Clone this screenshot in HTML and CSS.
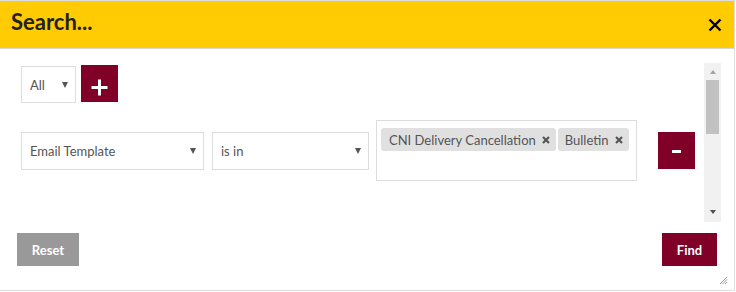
FILE: index.html
```html
<!DOCTYPE html>
<html lang="en">
<head>
    <meta charset="UTF-8">
    <title>Search</title>
    <link rel="stylesheet" href="styles.css">
</head>
<body>
    <div class="dialog">
        <div class="dialog-header">
            <span class="dialog-title">Search...</span>
            <svg class="close-icon" width="14" height="14" viewBox="0 0 14 14">
                <path d="M1.5 1.5 L12.5 12.5 M12.5 1.5 L1.5 12.5" stroke="#000" stroke-width="2.4" fill="none"/>
            </svg>
        </div>

        <div class="dialog-body">
            <div class="scroll-area">
                <div class="criteria">
                    <div class="row row-top">
                        <div class="select select-small">
                            <span>All</span>
                            <i class="caret"></i>
                        </div>
                        <button class="btn-square">
                            <svg width="37" height="37" viewBox="0 0 37 37">
                                <path d="M10.5 22.5 H26.5 M18.5 14.5 V30.5" stroke="#fff" stroke-width="3" fill="none"/>
                            </svg>
                        </button>
                    </div>

                    <div class="row row-criterion">
                        <div class="select select-field">
                            <span>Email Template</span>
                            <i class="caret"></i>
                        </div>
                        <div class="select select-op">
                            <span>is in</span>
                            <i class="caret"></i>
                        </div>
                        <div class="tag-box">
                            <span class="tag">CNI Delivery Cancellation
                                <svg class="tag-x" width="8" height="8" viewBox="0 0 8 8"><path d="M1 1 L7 7 M7 1 L1 7" stroke="#555" stroke-width="2.2" fill="none"/></svg>
                            </span>
                            <span class="tag">Bulletin
                                <svg class="tag-x" width="8" height="8" viewBox="0 0 8 8"><path d="M1 1 L7 7 M7 1 L1 7" stroke="#555" stroke-width="2.2" fill="none"/></svg>
                            </span>
                        </div>
                        <button class="btn-square btn-remove">
                            <svg width="37" height="37" viewBox="0 0 37 37">
                                <rect x="14" y="18" width="9" height="3" fill="#fff"/>
                            </svg>
                        </button>
                    </div>
                </div>

                <div class="scrollbar">
                    <i class="arrow-up"></i>
                    <div class="thumb"></div>
                    <div class="track-fill"></div>
                    <i class="arrow-down"></i>
                </div>
            </div>

            <div class="dialog-footer">
                <button class="btn btn-reset">Reset</button>
                <button class="btn btn-find">Find</button>
            </div>
        </div>

        <svg class="grip" width="9" height="9" viewBox="0 0 9 9">
            <path d="M8 1 L1 8 M8 3.5 L3.5 8 M8 6 L6 8" stroke="#999" stroke-width="1" fill="none"/>
        </svg>
    </div>
</body>
</html>
```

FILE: styles.css
```css
body {
    margin: 0;
    padding: 0;
    font-family: 'Lato', 'Liberation Sans', sans-serif;
    background: #fff;
}

.dialog {
    position: relative;
    width: 734px;
    height: 289px;
    border-top: 1px solid #ddd;
    border-right: 1px solid #ddd;
    border-bottom: 1px solid #ddd;
    display: flex;
    flex-direction: column;
}

.dialog-header {
    height: 47px;
    background: #ffcb02;
    border-bottom: 1px solid #d6d6d6;
    display: flex;
    justify-content: space-between;
    align-items: flex-start;
    padding: 0 12px 0 11px;
}

.dialog-title {
    font-size: 22px;
    font-weight: bold;
    line-height: 26px;
    color: #222;
    padding-top: 8px;
}

.close-icon {
    margin-top: 17px;
}

.dialog-body {
    flex: 1;
    padding: 14px 13px 0 17px;
    display: flex;
    flex-direction: column;
    gap: 11px;
}

.scroll-area {
    height: 159px;
    display: flex;
}

.criteria {
    flex: 1;
    padding: 2px 0 0 4px;
}

.row {
    display: flex;
}

.row-top {
    align-items: flex-start;
    gap: 5px;
}

.row-criterion {
    margin-top: 17px;
    align-items: center;
}

.select {
    box-sizing: border-box;
    border: 1px solid #ddd;
    height: 38px;
    padding: 0 7px 0 8px;
    display: flex;
    align-items: center;
    justify-content: space-between;
    font-size: 13px;
    color: #555;
    background: #fff;
}

.select-small {
    width: 55px;
    height: 37px;
    margin-top: 1px;
}

.select-field {
    width: 183px;
}

.select-op {
    width: 157px;
    margin-left: 8px;
}

.caret {
    width: 0;
    height: 0;
    border-left: 3.5px solid transparent;
    border-right: 3.5px solid transparent;
    border-top: 6px solid #555;
}

.tag-box {
    box-sizing: border-box;
    width: 261px;
    height: 61px;
    margin-left: 7px;
    border: 1px solid #ddd;
    padding: 7px 4px;
    display: flex;
    align-items: flex-start;
    gap: 2px;
}

.tag {
    height: 23px;
    box-sizing: border-box;
    background: #e0e0e0;
    border-radius: 3px;
    padding: 0 6px 0 8px;
    display: flex;
    align-items: center;
    gap: 6px;
    font-size: 13px;
    color: #555;
    white-space: nowrap;
}

.tag + .tag {
    padding-left: 7px;
}

.btn-square {
    width: 37px;
    height: 37px;
    padding: 0;
    border: none;
    background: #800028;
    display: block;
}

.btn-square svg {
    display: block;
}

.btn-remove {
    margin-left: 21px;
}

.scrollbar {
    width: 17px;
    background: #f1f1f1;
    display: flex;
    flex-direction: column;
    align-items: center;
}

.arrow-up {
    width: 0;
    height: 0;
    margin-top: 7px;
    border-left: 3.5px solid transparent;
    border-right: 3.5px solid transparent;
    border-bottom: 4px solid #a3a3a3;
}

.thumb {
    width: 13px;
    height: 54px;
    margin-top: 6px;
    background: #c1c1c1;
}

.track-fill {
    flex: 1;
}

.arrow-down {
    width: 0;
    height: 0;
    margin-bottom: 8px;
    border-left: 3.5px solid transparent;
    border-right: 3.5px solid transparent;
    border-top: 4px solid #505050;
}

.dialog-footer {
    display: flex;
    justify-content: space-between;
    padding-right: 4px;
}

.btn {
    height: 33px;
    border: none;
    color: #fff;
    font-family: 'Lato', 'Liberation Sans', sans-serif;
    font-size: 13px;
    font-weight: bold;
    padding: 0 14px;
}

.btn-reset {
    width: 62px;
    background: #999;
}

.btn-find {
    width: 55px;
    background: #800028;
}

.grip {
    position: absolute;
    right: 6px;
    bottom: 5px;
}
```
